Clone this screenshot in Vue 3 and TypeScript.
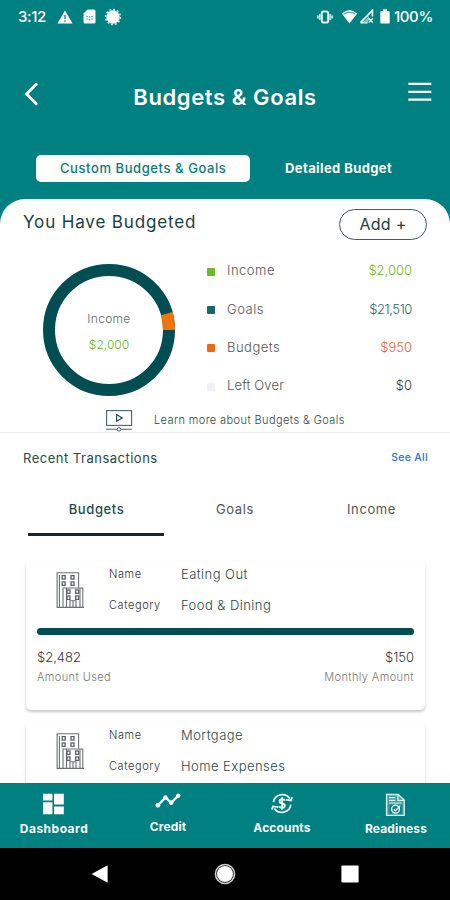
<script setup lang="ts">
interface LegendItem {
  key: string
  label: string
  value: string
}

interface Budget {
  name: string
  category: string
  used?: string
  monthly?: string
}

const legend: LegendItem[] = [
  { key: 'income', label: 'Income', value: '$2,000' },
  { key: 'goals', label: 'Goals', value: '$21,510' },
  { key: 'budgets', label: 'Budgets', value: '$950' },
  { key: 'left', label: 'Left Over', value: '$0' },
]

const budgets: Budget[] = [
  { name: 'Eating Out', category: 'Food & Dining', used: '$2,482', monthly: '$150' },
  { name: 'Mortgage', category: 'Home Expenses' },
]
</script>

<template>
  <div class="screen">
    <div class="status">
      <span class="clock">3:12</span>
      <svg class="s-warn" width="16" height="14" viewBox="0 0 16 14">
        <path d="M8 0.5L15.6 13.5H0.4z" fill="#fff" />
        <path d="M8 5v4M8 10.3v1.5" stroke="#008080" stroke-width="1.3" />
      </svg>
      <svg class="s-sim" width="13" height="15" viewBox="0 0 13 15">
        <path d="M4.5 0.5H11Q12.5 0.5 12.5 2V13Q12.5 14.5 11 14.5H2Q0.5 14.5 0.5 13V4.5z" fill="#f2fafa" />
        <path d="M3.2 7.5h1.6M8.2 7.5h1.6M3.2 10h1.6M8.2 10h1.6M6.5 7v1.5M6.5 10v1.5" stroke="#5fa9a9" stroke-width="1.2" />
      </svg>
      <svg class="s-sun" width="18" height="18" viewBox="0 0 18 18">
        <circle cx="9" cy="9" r="6.7" fill="#fff" />
        <circle cx="9" cy="9" r="7.4" fill="none" stroke="#d4ecec" stroke-width="1.6" stroke-dasharray="1.9 1.97" />
      </svg>
      <span class="grow"></span>
      <svg class="s-vib" width="18" height="14" viewBox="0 0 18 14">
        <rect x="5.8" y="1.5" width="6.4" height="11" rx="1.8" fill="none" stroke="#e4f4f4" stroke-width="2" />
        <path d="M3.8 4v6M14.2 4v6M1.8 5.5v3M16.2 5.5v3" stroke="#bfe0e0" stroke-width="1.8" />
      </svg>
      <svg class="s-wifi" width="17" height="15" viewBox="0 0 17 15">
        <path d="M0.8 4.4Q8.5 -2.6 16.2 4.4L8.5 14.4z" fill="#fff" />
        <path d="M2.6 5.4Q8.5 0.8 14.4 5.4" fill="none" stroke="#4da6a6" stroke-width="1.1" />
      </svg>
      <svg class="s-cell" width="15" height="15" viewBox="0 0 15 15">
        <path d="M1.5 13.6L13.4 1.4V7.6M1.5 13.6H8.5" fill="none" stroke="#fff" stroke-width="1.7" />
        <path d="M4 13.5L10 7v3.5L8.5 13.5z" fill="#8cc6c6" />
        <path d="M9.8 9.6l4 4M13.8 9.6l-4 4" stroke="#fff" stroke-width="1.4" />
      </svg>
      <svg class="s-batt" width="10" height="15" viewBox="0 0 10 15">
        <path d="M3 0.3H7V2H8.6Q9.7 2 9.7 3.1V13.4Q9.7 14.6 8.6 14.6H1.4Q0.3 14.6 0.3 13.4V3.1Q0.3 2 1.4 2H3z" fill="#fff" />
      </svg>
      <span class="percent">100%</span>
    </div>

    <header class="header">
      <svg class="back" width="15" height="24" viewBox="0 0 15 24">
        <path d="M12.2 2.3L2.6 12L12.2 21.7" fill="none" stroke="#fff" stroke-width="2.9" stroke-linecap="round" />
      </svg>
      <h1 class="title">Budgets &amp; Goals</h1>
      <svg class="menu" width="24" height="20" viewBox="0 0 24 20">
        <path d="M0.3 1.8H23.3M0.3 9.8H23.3M0.3 17.6H23.3" stroke="#fff" stroke-width="2.3" />
      </svg>
    </header>

    <div class="segments">
      <div class="segment active">Custom Budgets &amp; Goals</div>
      <div class="segment detail">Detailed Budget</div>
    </div>

    <main class="sheet">
      <div class="heading">
        <h2 class="budgeted">You Have Budgeted</h2>
        <button class="add" type="button">Add +</button>
      </div>

      <div class="summary">
        <div class="donut">
          <svg width="134" height="134" viewBox="0 0 134 134">
            <circle cx="67" cy="67" r="60" fill="none" stroke="#004d52" stroke-width="12" />
            <path d="M127 67A60 60 0 0 0 124.7 50.6" fill="none" stroke="#f0760c" stroke-width="12.2" />
          </svg>
          <div class="donut-text">
            <span class="donut-label">Income</span>
            <span class="donut-value">$2,000</span>
          </div>
        </div>
        <ul class="legend">
          <li v-for="item in legend" :key="item.key" :class="item.key">
            <i class="dot"></i>
            <span class="legend-label">{{ item.label }}</span>
            <span class="legend-value">{{ item.value }}</span>
          </li>
        </ul>
      </div>

      <div class="learn">
        <svg width="28" height="23" viewBox="0 0 28 23">
          <rect x="1.6" y="1.6" width="25" height="14.8" fill="none" stroke="#4a6567" stroke-width="1.1" />
          <path d="M11.6 5.6V12.2L17.2 8.9z" fill="none" stroke="#24494b" stroke-width="1.2" />
          <path d="M1 20.3H12M16 20.3H27" stroke="#4a6567" stroke-width="1.1" />
          <circle cx="14" cy="20.3" r="1.8" fill="none" stroke="#4a6567" />
        </svg>
        <span>Learn more about Budgets &amp; Goals</span>
      </div>

      <div class="recent">
        <h3>Recent Transactions</h3>
        <a class="see-all">See All</a>
      </div>

      <nav class="tabs">
        <span class="tab tab-budgets selected">Budgets</span>
        <span class="tab tab-goals">Goals</span>
        <span class="tab tab-income">Income</span>
      </nav>

      <div class="list">
        <article v-for="b in budgets" :key="b.name" class="card">
          <div class="card-top">
            <svg class="building" width="30" height="38" viewBox="0 0 30 38">
              <g fill="none" stroke="#6a7073" stroke-width="1.1">
                <path d="M2.1 36.4V1.8H23.6V16.4M1.6 36.4H29M4.4 36V4" />
                <path d="M8 36V17H27.8V36.4M11.5 36V17M15 36V29.8H21V36M18 30V36M25 17V36" />
              </g>
              <g fill="none" stroke="#5b6164" stroke-width="1.3">
                <rect x="7.2" y="4.6" width="3" height="3.4" /><rect x="16" y="4.6" width="3" height="3.4" />
                <rect x="7.2" y="11" width="3" height="3.4" /><rect x="16" y="11" width="3" height="3.4" />
                <rect x="12" y="19" width="3" height="3.4" /><rect x="20.6" y="19" width="3" height="3.4" />
                <rect x="12" y="25" width="3" height="3.4" /><rect x="20.6" y="25" width="3" height="3.4" />
              </g>
            </svg>
            <dl class="facts">
              <dt>Name</dt>
              <dd>{{ b.name }}</dd>
              <dt>Category</dt>
              <dd>{{ b.category }}</dd>
            </dl>
          </div>
          <template v-if="b.used">
            <div class="bar"></div>
            <div class="amounts">
              <span>{{ b.used }}</span>
              <span>{{ b.monthly }}</span>
            </div>
            <div class="captions">
              <span>Amount Used</span>
              <span>Monthly Amount</span>
            </div>
          </template>
        </article>
      </div>
    </main>

    <nav class="bottom">
      <a class="item dashboard">
        <svg width="22" height="22" viewBox="0 0 22 22">
          <path d="M0 0.8H9.4V7.6H0zM11 0.8H20.8V11.6H11zM0 9.2H9.4V21.2H0zM11 13.6H20.8V21.2H11z" fill="#fff" />
        </svg>
        <span>Dashboard</span>
      </a>
      <a class="item credit">
        <svg width="26" height="22" viewBox="0 0 26 22">
          <path d="M2.8 12.4L10.6 4.4L16.2 9.8L23 2.8" fill="none" stroke="#fff" stroke-width="2.4" />
          <g fill="#fff">
            <circle cx="2.9" cy="12.3" r="2.4" /><circle cx="10.4" cy="4.4" r="2.2" />
            <circle cx="16.2" cy="9.8" r="2.2" /><circle cx="23.2" cy="2.7" r="2.2" />
          </g>
        </svg>
        <span>Credit</span>
      </a>
      <a class="item accounts">
        <svg width="24" height="22" viewBox="0 0 24 22">
          <g fill="none" stroke="#e6f5f5" stroke-width="1.8">
            <path d="M3.4 9A9 8.8 0 0 1 19.8 5.6M20.8 11.6A9 8.8 0 0 1 4.4 15.4" />
            <path d="M15.6 6.6L21 7.4L22.2 4.2M8.4 14.2L3 13.4L1.8 16.6" stroke-width="1.8" />
            <path d="M14.8 7.6Q14.2 6.2 12.2 6.2Q9.6 6.2 9.6 8.3Q9.6 10.2 12.2 10.5Q14.8 10.9 14.8 12.8Q14.8 14.9 12.2 14.9Q9.8 14.9 9.3 13.3M12.2 4.3V16.8" stroke="#fff" />
          </g>
        </svg>
        <span>Accounts</span>
      </a>
      <a class="item readiness">
        <svg width="22" height="24" viewBox="0 0 22 24">
          <path d="M1.6 1.5H13.2L19.2 7V22.4H1.6z" fill="#3d9c9c" stroke="#d7eeee" stroke-width="1.4" />
          <path d="M13 1.5V7.3H19.2M4 4.6H10.4M4 7.4H10.4M4 10H16.8" fill="none" stroke="#e6f5f5" stroke-width="1.2" />
          <rect x="4.6" y="11.8" width="12" height="8.8" fill="#008080" />
          <circle cx="10.5" cy="16.2" r="3.9" fill="none" stroke="#fff" stroke-width="1.4" />
          <path d="M8.8 16.2L10.4 17.8L15.2 12.6" fill="none" stroke="#fff" stroke-width="1.4" />
        </svg>
        <span>Readiness</span>
      </a>
    </nav>

    <div class="system">
      <svg width="18" height="20" viewBox="0 0 18 20"><path d="M0.6 10L16.6 1.2V18.8z" fill="#fff" /></svg>
      <svg width="22" height="22" viewBox="0 0 22 22">
        <circle cx="11" cy="11" r="9.5" fill="none" stroke="#d2d2d2" stroke-width="1.6" />
        <circle cx="11" cy="11" r="8" fill="#fff" />
      </svg>
      <svg width="18" height="18" viewBox="0 0 18 18"><rect x="0.4" y="0.4" width="17.2" height="17.2" rx="1" fill="#fff" /></svg>
    </div>
  </div>
</template>

<style>
body {
  margin: 0;
}
</style>

<style scoped>
* {
  box-sizing: border-box;
}
.screen {
  width: 450px;
  height: 900px;
  overflow: hidden;
  display: flex;
  flex-direction: column;
  background: #008080;
  font-family: Inter, "Open Sans", sans-serif;
  color: #27494b;
  white-space: nowrap;
}
svg {
  display: block;
  flex: none;
}
h1,
h2,
h3,
ul,
dl,
dd {
  margin: 0;
  padding: 0;
}
.status {
  height: 33px;
  flex: none;
  display: flex;
  align-items: center;
  padding: 0 17px 0 18px;
  color: #fff;
  font-size: 15px;
  font-weight: 500;
}
.clock {
  width: 39px;
  letter-spacing: -0.4px;
}
.s-sim {
  margin-left: 10px;
}
.s-sun {
  margin-left: 8px;
}
.grow {
  flex: 1;
}
.s-wifi {
  margin-left: 7px;
}
.s-cell {
  margin-left: 1px;
}
.s-batt {
  margin: 0 4px 0 6px;
}
.percent {
  width: 39px;
  letter-spacing: -0.4px;
}
.header {
  height: 122px;
  flex: none;
  display: flex;
  align-items: center;
  justify-content: space-between;
  padding: 0 18px 0 24px;
}
.title {
  margin-top: 6px;
  padding-left: 3px;
  color: #fff;
  font-size: 22px;
  line-height: 30px;
  font-weight: 600;
  letter-spacing: 0.6px;
}
.menu {
  margin-bottom: 5px;
}
.segments {
  height: 44px;
  flex: none;
  display: flex;
  align-items: flex-start;
  padding-left: 36px;
}
.segment {
  height: 27px;
  line-height: 26px;
  font-size: 13px;
}
.active {
  width: 214px;
  background: #fff;
  border-radius: 5px;
  color: #087b7b;
  padding-left: 24px;
  font-weight: 500;
  letter-spacing: 0.58px;
}
.detail {
  margin-left: 35px;
  color: #fff;
  font-weight: 700;
  letter-spacing: 0.4px;
}
.sheet {
  flex: 1;
  min-height: 0;
  overflow: hidden;
  background: #fff;
  border-radius: 25px 25px 0 0;
}
.heading {
  height: 51px;
  padding: 10px 23px 0;
  display: flex;
  justify-content: space-between;
}
.budgeted {
  font-size: 17px;
  line-height: 27px;
  font-weight: 400;
  color: #173f43;
  letter-spacing: 0.86px;
}
.add {
  width: 88px;
  height: 31px;
  padding: 0 0 2px;
  background: #fff;
  border: 1.3px solid #3d5e60;
  border-radius: 16px;
  font: 400 16px/26px Inter, "Open Sans", sans-serif;
  letter-spacing: 0.3px;
  color: #173f43;
}
.summary {
  height: 154px;
  display: flex;
  padding: 13px 38px 0 42px;
}
.donut {
  position: relative;
  width: 134px;
  height: 134px;
}
.donut-text {
  position: absolute;
  inset: 3px 0 0;
  display: flex;
  flex-direction: column;
  align-items: center;
  justify-content: center;
  font-size: 12px;
  line-height: 26px;
  font-weight: 300;
}
.donut-label {
  color: #666;
  letter-spacing: 0.3px;
}
.donut-value {
  color: #63b82b;
}
.legend {
  flex: 1;
  margin-left: 31px;
  margin-top: -12px;
  list-style: none;
  font-weight: 300;
}
.legend li {
  height: 38.4px;
  display: flex;
  align-items: center;
  font-size: 13px;
  line-height: 20px;
}
.dot {
  width: 8px;
  height: 8px;
  margin: 3px 12px 0 0;
  border-radius: 1px;
  background: #17686b;
}
.income .dot {
  background: #68bd22;
}
.budgets .dot {
  background: #ed6a10;
}
.left .dot {
  background: #f1f2f5;
}
.legend-label {
  flex: 1;
  color: #555;
  letter-spacing: 0.5px;
}
.left .legend-label {
  letter-spacing: 0.15px;
}
.income .legend-value {
  color: #68bd22;
}
.goals .legend-value {
  color: #24666a;
  letter-spacing: -0.4px;
}
.budgets .legend-value {
  color: #f26430;
}
.left .legend-value {
  color: #333;
}
.learn {
  height: 29px;
  display: flex;
  gap: 21px;
  padding: 5px 0 0 105px;
  border-bottom: 1px solid #eceeee;
  font-size: 11px;
  line-height: 22px;
  font-weight: 300;
  letter-spacing: 0.4px;
  color: #30474a;
}
.recent {
  height: 50px;
  display: flex;
  justify-content: space-between;
  padding: 0 22px 0 23px;
  line-height: 50px;
}
.recent h3 {
  font-size: 13px;
  font-weight: 400;
  letter-spacing: 0.5px;
}
.see-all {
  font-size: 10.5px;
  font-weight: 500;
  letter-spacing: 0.3px;
  color: #2d6fe0;
}
.tabs {
  height: 53px;
  display: flex;
  padding-left: 28px;
  font-size: 13px;
  line-height: 52px;
  text-align: center;
  color: #555;
  letter-spacing: 0.6px;
}
.tab {
  width: 136px;
}
.tab-goals {
  width: 142px;
}
.tab-income {
  width: 131px;
}
.selected {
  padding-left: 1px;
  font-weight: 500;
  color: #174e50;
  border-bottom: 3px solid #1b2238;
}
.list {
  padding: 25px 25px 0 26px;
}
.card {
  height: 149px;
  margin-bottom: 12px;
  padding: 0 11px;
  border-radius: 5px;
  background: #fff;
  box-shadow: 0 2px 3px rgba(0, 0, 0, 0.22);
}
.card-top {
  display: flex;
  height: 67px;
  padding-left: 18px;
}
.building {
  margin-top: 10px;
}
.facts {
  margin-left: 24px;
  display: grid;
  grid-template-columns: 72px auto;
  grid-auto-rows: 30.5px;
  line-height: 27px;
  font-size: 13px;
  letter-spacing: 0.45px;
  font-weight: 300;
}
.facts dt {
  font-size: 11px;
  letter-spacing: 0.6px;
  color: #333;
}
.bar {
  height: 7px;
  border-radius: 4px;
  background: #004d52;
}
.amounts,
.captions {
  display: flex;
  justify-content: space-between;
  font-weight: 300;
}
.amounts {
  margin-top: 12px;
  font-size: 13px;
  line-height: 20px;
  color: #333;
}
.captions {
  font-size: 11px;
  line-height: 21px;
  color: #777;
  letter-spacing: 0.4px;
}
.bottom {
  height: 65px;
  flex: none;
  margin: 0 -3px;
  display: grid;
  grid-template-columns: repeat(4, 114px);
  background: #008080;
  color: #fff;
  font-size: 12px;
  font-weight: 700;
  line-height: 18px;
}
.item {
  display: flex;
  flex-direction: column;
  align-items: center;
  padding-top: 10px;
}
.item span {
  margin-top: 5px;
  letter-spacing: 0.15px;
}
.dashboard span {
  letter-spacing: 0.5px;
}
.readiness span {
  margin-top: 3px;
}
.credit span {
  margin-top: 3px;
}
.accounts span {
  margin-top: 4px;
}
.system {
  height: 52px;
  flex: none;
  background: #000;
  display: flex;
  align-items: center;
  justify-content: space-between;
  padding: 0 91px;
}
</style>
